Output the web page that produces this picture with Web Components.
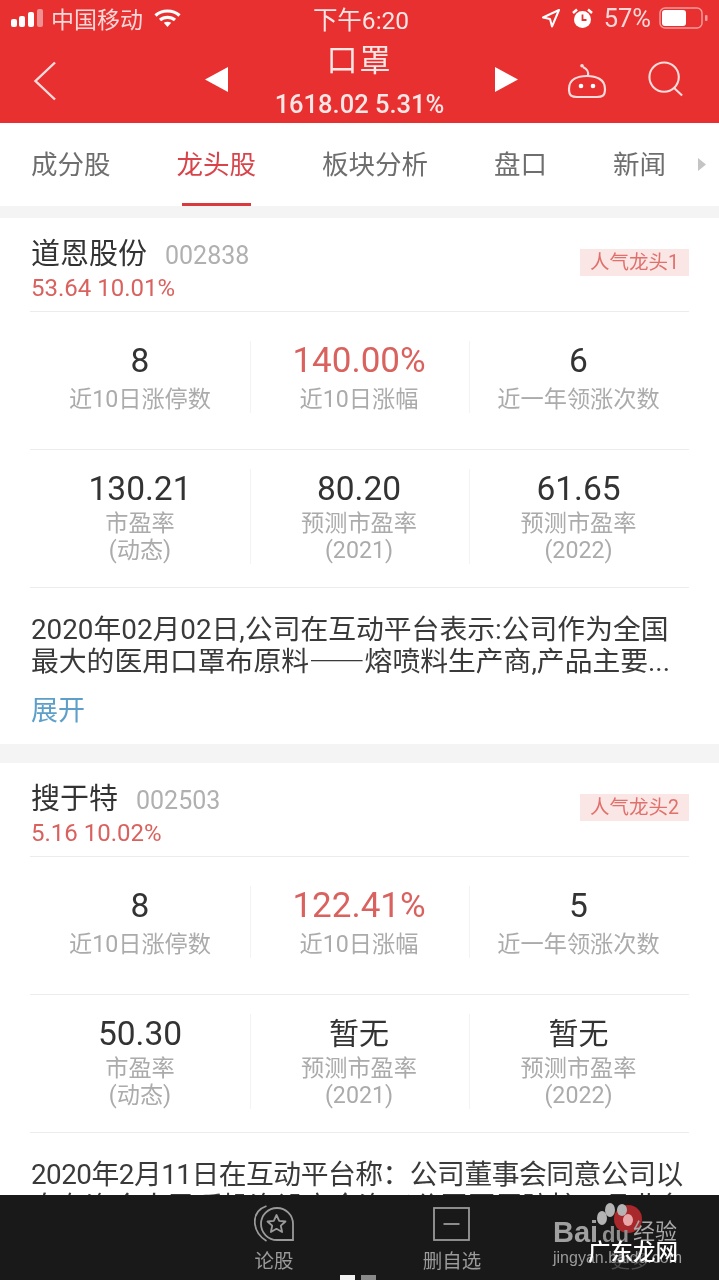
<!DOCTYPE html>
<html lang="zh">
<head>
<meta charset="utf-8">
<title>口罩</title>
<style>
    html, body { margin: 0; padding: 0; background: #f4f4f4; }
    body { font-family: Roboto, "Noto Sans CJK SC", sans-serif; }
</style>
</head>
<body>
<stock-app>
    <status-bar slot="top"></status-bar>
    <nav-bar slot="top"></nav-bar>
    <tab-bar slot="top"></tab-bar>

    <stock-card name="道恩股份" code="002838" quote="53.64 10.01%" badge="人气龙头1" more>
        <stat-row>
            <stat-cell value="8" label="近10日涨停数"></stat-cell>
            <stat-cell value="140.00%" label="近10日涨幅" hot></stat-cell>
            <stat-cell value="6" label="近一年领涨次数"></stat-cell>
        </stat-row>
        <stat-row slot="second">
            <stat-cell value="130.21" label="市盈率" sub="(动态)"></stat-cell>
            <stat-cell value="80.20" label="预测市盈率" sub="(2021)"></stat-cell>
            <stat-cell value="61.65" label="预测市盈率" sub="(2022)"></stat-cell>
        </stat-row>
        <span slot="text">2020年02月02日,公司在互动平台表示:公司作为全国<br>最大的医用口罩布原料<span style="font-family:'Noto Sans CJK SC',sans-serif;line-height:0">——</span>熔喷料生产商,产品主要...</span>
    </stock-card>

    <stock-card name="搜于特" code="002503" quote="5.16 10.02%" badge="人气龙头2">
        <stat-row>
            <stat-cell value="8" label="近10日涨停数"></stat-cell>
            <stat-cell value="122.41%" label="近10日涨幅" hot></stat-cell>
            <stat-cell value="5" label="近一年领涨次数"></stat-cell>
        </stat-row>
        <stat-row slot="second">
            <stat-cell value="50.30" label="市盈率" sub="(动态)"></stat-cell>
            <stat-cell value="暂无" label="预测市盈率" sub="(2021)" cjk></stat-cell>
            <stat-cell value="暂无" label="预测市盈率" sub="(2022)" cjk></stat-cell>
        </stat-row>
        <span slot="text" style="letter-spacing:-.5px">2020年2月11日在互动平台称：公司董事会同意公司以<br>自有资金人民币投资设立全资子公司开展防护用品业务</span>
    </stock-card>

    <dock-bar slot="bottom"></dock-bar>
</stock-app>

<script>
class StockApp extends HTMLElement {
    constructor() {
        super();
        this.attachShadow({ mode: 'open' });
        this.shadowRoot.innerHTML = `
        <style>
            :host {
                display: flex;
                flex-direction: column;
                height: 1280px;
                overflow: hidden;
                background: #f4f4f4;
                filter: blur(.5px);
            }
            .scroll { flex: 1; min-height: 0; overflow: hidden; }
        </style>
        <slot name="top"></slot>
        <div class="scroll"><slot></slot></div>
        <slot name="bottom"></slot>`;
    }
}

class StatusBar extends HTMLElement {
    constructor() {
        super();
        this.attachShadow({ mode: 'open' });
        this.shadowRoot.innerHTML = `
        <style>
            :host {
                display: grid;
                grid-template-columns: 1fr auto 1fr;
                align-items: center;
                height: 36px;
                padding: 0 11px 2px 11px;
                background: #e83030;
                color: #f8d8d8;
                font-size: 23px;
            }
            .left, .right { display: flex; align-items: center; }
            .right { justify-content: flex-end; }
            .left span { margin: 0 11px 0 8px; }
            .time { color: #fbe6e6; font-size: 24.500px; margin-left: 3px; }
            .pct { margin: 0 8px 0 11px; font-size: 25.500px; }
            svg { display: block; }
        </style>
        <div class="left">
            <svg width="32" height="20" viewBox="0 0 32 20">
                <rect x="0" y="11" width="6" height="8" rx="2" fill="#fff"/>
                <rect x="8" y="8" width="6" height="11" rx="2" fill="#fff"/>
                <rect x="17" y="4" width="6" height="15" rx="2" fill="#fff"/>
                <rect x="26" y="1" width="6" height="18" rx="2" fill="#f19090"/>
            </svg>
            <span>中国移动</span>
            <svg width="27" height="20" viewBox="0 0 27 20" fill="none" stroke="#fff" stroke-width="3.2">
                <path d="M1.5 7.5C8 1.5 19 1.5 25.5 7.5"/>
                <path d="M6 12c4.200-3.600 10.800-3.600 15 0"/>
                <path d="M13.500 19l-3.700-4.200c2.200-1.400 5.200-1.400 7.400 0z" fill="#fff" stroke="none"/>
            </svg>
        </div>
        <div class="time">下午6:20</div>
        <div class="right">
            <svg width="18" height="20" viewBox="0 0 18 20" fill="none" stroke="#fff" stroke-width="2" stroke-linejoin="round">
                <path d="M17 2L1 9.500l7 1.500 2 7.500z"/>
            </svg>
            <svg style="margin-left:12px" width="21" height="21" viewBox="0 0 21 21">
                <circle cx="10.500" cy="11.500" r="8.500" fill="#fff"/>
                <path d="M10.500 6.500v5.500h4" fill="none" stroke="#e83030" stroke-width="1.800"/>
                <path d="M1 5l4-3.500M20 5l-4-3.500" stroke="#fff" stroke-width="2.500"/>
            </svg>
            <span class="pct">57%</span>
            <svg width="49" height="22" viewBox="0 0 49 22">
                <rect x="1" y="1" width="42" height="20" rx="5" fill="none" stroke="#f39a9a" stroke-width="1.500"/>
                <rect x="3" y="3" width="24" height="16" rx="3" fill="#fff"/>
                <rect x="46" y="8" width="2.500" height="6" rx="1" fill="#f39a9a"/>
            </svg>
        </div>`;
    }
}

class NavBar extends HTMLElement {
    constructor() {
        super();
        this.attachShadow({ mode: 'open' });
        this.shadowRoot.innerHTML = `
        <style>
            :host {
                display: flex;
                align-items: flex-start;
                height: 85px;
                background: #e83030;
                color: #fbe6e6;
            }
            svg { display: block; flex: none; }
            .back { margin: 23px 0 0 33px; }
            .prev { margin: 29px 0 0 148px; }
            .title {
                flex: none;
                width: 267px;
                margin-left: -2px;
                margin-right: 2px;
                text-align: center;
                white-space: nowrap;
            }
            .name { font-size: 31px; line-height: 46px; letter-spacing: 2px; }
            .quote { font-size: 25.500px; line-height: 36px; font-weight: 500; margin-top: 2px; }
            .next { margin: 29px 0 0 0; }
            .bot { margin: 25px 0 0 49px; }
            .search { margin: 23px 0 0 41px; }
        </style>
        <svg class="back" width="24" height="40" viewBox="0 0 24 40" fill="none" stroke="#fbdcdc" stroke-width="2.400">
            <path d="M22 1.500L2.500 20 22 38.500"/>
        </svg>
        <svg class="prev" width="23" height="25" viewBox="0 0 23 25"><path d="M0 12.500L23 0v25z" fill="#fff"/></svg>
        <div class="title">
            <div class="name">口罩</div>
            <div class="quote">1618.02 5.31%</div>
        </div>
        <svg class="next" width="23" height="25" viewBox="0 0 23 25"><path d="M23 12.500L0 0v25z" fill="#fff"/></svg>
        <svg class="bot" width="40" height="36" viewBox="0 0 40 36" fill="none" stroke="#fbdcdc" stroke-width="2.200">
            <path d="M21 13C22 8 20 6 16 4"/>
            <circle cx="15" cy="2.800" r="1.800" fill="#fbdcdc" stroke="none"/>
            <path d="M20 13c-9 0-18 3-18 13 0 7 3 8 8 8h20c5 0 8-1 8-8 0-10-9-13-18-13z"/>
            <circle cx="14" cy="23" r="2.300" fill="#fff" stroke="none"/>
            <circle cx="26" cy="23" r="2.300" fill="#fff" stroke="none"/>
        </svg>
        <svg class="search" width="36" height="36" viewBox="0 0 38 38" fill="none" stroke="#fbdcdc" stroke-width="2.200">
            <circle cx="17" cy="17" r="15.500"/>
            <path d="M27 28l9 8.500"/>
        </svg>`;
    }
}

class TabBar extends HTMLElement {
    constructor() {
        super();
        this.attachShadow({ mode: 'open' });
        const tabs = ['成分股', '龙头股', '板块分析', '盘口', '新闻'];
        this.shadowRoot.innerHTML = `
        <style>
            :host {
                display: flex;
                align-items: center;
                height: 83px;
                padding-left: 31px;
                background: #fff;
                color: #6e6e6e;
                font-size: 26.500px;
                box-sizing: border-box;
            }
            .tab { position: relative; flex: none; line-height: 83px; margin-right: 66px; white-space: nowrap; }
            .tab:nth-of-type(5) { margin-right: 32px; }
            .on { color: #d8444a; }
            .on::after {
                content: "";
                position: absolute;
                left: 5px;
                right: 5px;
                bottom: 0;
                height: 3px;
                background: #d83a3e;
            }
            svg { display: block; flex: none; }
        </style>
        ${tabs.map((t, i) => `<div class="tab${i === 1 ? ' on' : ''}">${t}</div>`).join('')}
        <svg width="8" height="13" viewBox="0 0 8 13"><path d="M0 0l8 6.500L0 13z" fill="#c4c4c4"/></svg>`;
    }
}

class StockCard extends HTMLElement {
    constructor() {
        super();
        this.attachShadow({ mode: 'open' });
    }

    connectedCallback() {
        const name = this.getAttribute('name');
        const code = this.getAttribute('code');
        const quote = this.getAttribute('quote');
        const badge = this.getAttribute('badge');
        const more = this.hasAttribute('more');
        this.shadowRoot.innerHTML = `
        <style>
            :host {
                display: block;
                margin-top: 12px;
                margin-bottom: 19px;
                padding: 0 30px;
                background: #fff;
            }
            .head {
                display: grid;
                grid-template-columns: 1fr auto;
                align-items: start;
                height: 94px;
                padding-left: 1px;
                box-sizing: border-box;
                border-bottom: 1px solid #ececec;
            }
            .line { display: flex; align-items: baseline; gap: 18px; line-height: 38px; padding-top: 17px; }
            .name { font-size: 29px; color: #333; }
            .code { font-size: 25px; color: #b0b0b0; }
            .quote { font-size: 24px; line-height: 28px; margin-top: -1px; color: #d9625f; }
            .badge {
                margin-top: 31px;
                padding: 0 10px;
                height: 27px;
                line-height: 27px;
                font-size: 19.500px;
                color: #e0706c;
                background: #fae6e4;
            }
            .first { height: 138px; box-sizing: border-box; border-bottom: 1px solid #ececec; padding-top: 29px; }
            .second { height: 138px; box-sizing: border-box; border-bottom: 1px solid #ececec; padding-top: 19px; }
            .text {
                padding: 26px 0 0 1px;
                font-size: 27.800px;
                line-height: 32px;
                color: #3a3a3a;
                white-space: nowrap;
            }
            .more { margin: 16px 0 0 1px; height: 50px; font-size: 27px; line-height: 34px; color: #5d9fc9; }
        </style>
        <div class="head">
            <div>
                <div class="line"><span class="name">${name}</span><span class="code">${code}</span></div>
                <div class="quote">${quote}</div>
            </div>
            <div class="badge">${badge}</div>
        </div>
        <div class="first"><slot></slot></div>
        <div class="second"><slot name="second"></slot></div>
        <div class="text"><slot name="text"></slot></div>
        ${more ? '<div class="more">展开</div>' : ''}`;
    }
}

class StatRow extends HTMLElement {
    constructor() {
        super();
        this.attachShadow({ mode: 'open' });
        this.shadowRoot.innerHTML = `
        <style>
            :host { display: grid; grid-template-columns: 220px 219px 220px; }
            ::slotted(stat-cell:not(:first-child)) { border-left: 1px solid #f3f3f3; padding-right: 2px; }
        </style>
        <slot></slot>`;
    }
}

class StatCell extends HTMLElement {
    constructor() {
        super();
        this.attachShadow({ mode: 'open' });
    }

    connectedCallback() {
        const sub = this.getAttribute('sub');
        const hot = this.hasAttribute('hot');
        const size = this.hasAttribute('cjk') ? 30 : hot ? 35 : 33.5;
        this.shadowRoot.innerHTML = `
        <style>
            :host { display: block; text-align: center; white-space: nowrap; }
            .value { font-size: ${size}px; line-height: 40px; color: ${hot ? '#d9625f' : '#333'}; }
            .label { font-size: 23.200px; line-height: 27px; color: #ababab; }
            .gap { margin-top: 4px; line-height: 28px; }
            .top { margin-top: 1px; }
        </style>
        <div class="value">${this.getAttribute('value')}</div>
        <div class="label ${sub ? 'top' : 'gap'}">${this.getAttribute('label')}</div>
        ${sub ? `<div class="label">${sub}</div>` : ''}`;
    }
}

class DockBar extends HTMLElement {
    constructor() {
        super();
        this.attachShadow({ mode: 'open' });
        this.shadowRoot.innerHTML = `
        <style>
            :host {
                position: relative;
                display: flex;
                flex: none;
                justify-content: flex-end;
                height: 85px;
                background: #191919;
                color: #9a9a9a;
                font-size: 19.500px;
            }
            .item {
                display: flex;
                flex-direction: column;
                align-items: center;
                flex: none;
                width: 178px;
                padding-top: 10px;
                box-sizing: border-box;
            }
            .icon { display: flex; align-items: center; height: 38px; }
            .item span { line-height: 26px; margin-top: 6px; }
            .item.dim { color: #4a4a4a; }
            svg { display: block; }
            .pager { position: absolute; left: 340px; bottom: 0; display: flex; gap: 6px; }
            .pager i { display: block; width: 15px; height: 5px; background: #8a8a8a; }
            .pager i:first-child { background: #f2f2f2; }
            .mark { position: absolute; left: 0; top: 0; width: 100%; height: 100%; pointer-events: none; }
            .bai { position: absolute; left: 553px; top: 20px; font: bold 29px/34px "Liberation Sans", sans-serif; color: #a0a0a0; }
            .du { position: absolute; left: 602px; top: 27px; font: bold 22px/26px "Liberation Sans", sans-serif; color: #8f8f8f; }
            .jing { position: absolute; left: 633px; top: 23px; font-size: 22px; line-height: 28px; color: #a8a8a8; }
            .site { position: absolute; left: 553px; top: 52px; font: 16px/22px "Liberation Sans", sans-serif; color: #9a9a9a; }
            .gd { position: absolute; left: 588px; top: 41px; font-size: 22.500px; line-height: 32px; font-weight: 500; color: #fff; white-space: nowrap; }
            .paw { position: absolute; left: 595px; top: 5px; }
        </style>
        <div class="item">
            <div class="icon">
                <svg width="40" height="38" viewBox="0 0 40 38" fill="none" stroke="#9a9a9a" stroke-width="1.800">
                    <path d="M12.500 1C4 4 0 10 .9 19c.9 7 5 13 11.600 17"/>
                    <path d="M23 3a16 16 0 0 0 0 32h16V19A16 16 0 0 0 23 3z"/>
                    <path d="M22.500 10l2.700 5.800 6.300.7-4.700 4.200 1.300 6.300-5.600-3.200-5.600 3.200 1.300-6.300-4.700-4.200 6.300-.7z" stroke-linejoin="round"/>
                </svg>
            </div>
            <span>论股</span>
        </div>
        <div class="item">
            <div class="icon">
                <svg width="38" height="34" viewBox="0 0 38 34" fill="none" stroke="#9a9a9a" stroke-width="1.800">
                    <rect x="1" y="1" width="35" height="32"/>
                    <path d="M10.500 17h16"/>
                </svg>
            </div>
            <span>删自选</span>
        </div>
        <div class="item dim">
            <div class="icon"></div>
            <span>更多</span>
        </div>
        <div class="pager"><i></i><i></i></div>
        <div class="mark">
            <svg class="paw" width="50" height="40" viewBox="0 0 50 40">
                <circle cx="33" cy="19" r="14" fill="#a8282c"/>
                <ellipse cx="7" cy="18" rx="5" ry="7" fill="#b4b4b4"/>
                <ellipse cx="15" cy="10" rx="5" ry="7" fill="#b4b4b4"/>
                <ellipse cx="27" cy="10" rx="5" ry="6" fill="#b4b4b4"/>
                <ellipse cx="33" cy="20" rx="5" ry="6" fill="#e8a8aa"/>
            </svg>
            <span class="bai">Bai</span>
            <span class="du">du</span>
            <span class="jing">经验</span>
            <span class="site">jingyan.baidu.com</span>
            <span class="gd">广东龙网</span>
        </div>`;
    }
}

customElements.define('stock-app', StockApp);
customElements.define('status-bar', StatusBar);
customElements.define('nav-bar', NavBar);
customElements.define('tab-bar', TabBar);
customElements.define('stock-card', StockCard);
customElements.define('stat-row', StatRow);
customElements.define('stat-cell', StatCell);
customElements.define('dock-bar', DockBar);
</script>
</body>
</html>
